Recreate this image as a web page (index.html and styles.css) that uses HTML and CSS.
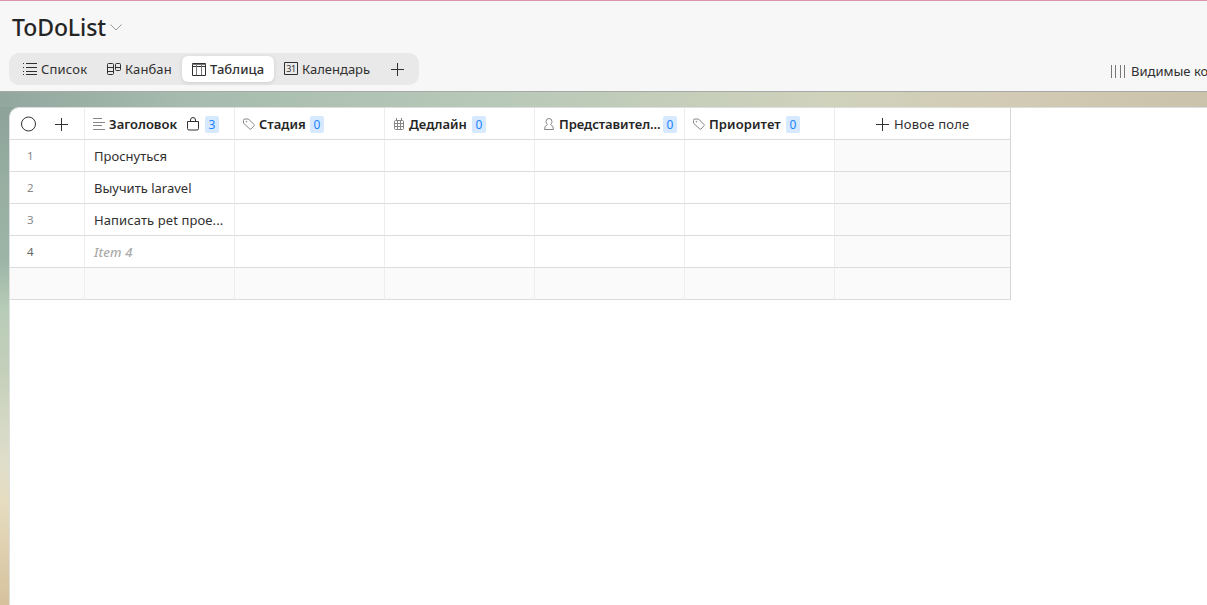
FILE: index.html
```html
<!DOCTYPE html>
<html lang="ru">
<head>
    <meta charset="UTF-8">
    <meta name="viewport" content="width=device-width, initial-scale=1.0">
    <title>ToDoList</title>
    <link rel="stylesheet" href="styles.css">
</head>
<body>
    <header class="header">
        <div class="title">
            <h1>ToDoList</h1>
            <svg class="chevron" width="12" height="7" viewBox="0 0 12 7"><path d="M.5.5 6 6 11.500.5"/></svg>
        </div>
        <div class="toolbar">
            <nav class="tabs">
                <a class="tab tab-list">
                    <svg width="14" height="14" viewBox="0 0 14 14"><path d="M3 1.500h11M3 5.500h11M3 9.500h11M3 12.500h11M0 1.500h1M0 5.500h1M0 9.500h1M0 12.500h1"/></svg>
                    <span>Список</span>
                </a>
                <a class="tab tab-kanban">
                    <svg width="14" height="14" viewBox="0 0 14 14"><path d="M1.500 1.500h4q1 0 1 1v9q0 1-1 1h-4q-1 0-1-1v-9q0-1 1-1zM.5 5.500h6M.5 9.500h6M9.500 1.500h3q1 0 1 1v5q0 1-1 1h-3q-1 0-1-1v-5q0-1 1-1zM8.500 5.500h5"/></svg>
                    <span>Канбан</span>
                </a>
                <a class="tab tab-table active">
                    <svg width="14" height="14" viewBox="0 0 14 14"><path d="M.5 1.500h13v12H.5zM.5 4.500h13"/><path class="thin" d="M.5 2.500h13M4.500 2v11M9.500 2v11"/></svg>
                    <span>Таблица</span>
                </a>
                <a class="tab tab-calendar">
                    <svg width="14" height="14" viewBox="0 0 14 14"><path d="M.5.5h13v12H.5z"/><text class="day" x="7" y="10" text-anchor="middle">31</text></svg>
                    <span>Календарь</span>
                </a>
                <a class="tab tab-add">
                    <svg width="13" height="13" viewBox="0 0 13 13"><path d="M6.500 0v13M0 6.500h13"/></svg>
                </a>
            </nav>
            <div class="columns-btn">
                <svg width="14" height="13" viewBox="0 0 14 13"><path d="M.5 0v13M4.500 0v13M9.500 0v13M13.500 0v13"/></svg>
                <span>Видимые колонки</span>
            </div>
        </div>
    </header>
    <main class="main">
        <div class="panel">
            <table class="grid">
                <colgroup>
                    <col class="col-num"><col><col><col><col><col><col class="col-new">
                </colgroup>
                <thead>
                    <tr>
                        <th>
                            <div class="cell cell-tools">
                                <svg width="16" height="16" viewBox="0 0 16 16"><circle cx="8.500" cy="8" r="7"/></svg>
                                <svg width="13" height="13" viewBox="0 0 13 13"><path d="M6.500 0v13M0 6.500h13"/></svg>
                            </div>
                        </th>
                        <th>
                            <div class="cell">
                                <svg class="icon" width="12" height="12" viewBox="0 0 12 12"><path d="M0 .5h9M0 4.500h12M0 7.500h9M0 11.500h12"/></svg>
                                <span class="name name-title">Заголовок</span>
                                <svg class="lock" width="12" height="14" viewBox="0 0 12 14"><path d="M.5 4.500h11v7q0 1.500-1.500 1.500H2q-1.500 0-1.500-1.500zM3.500 4.500V3a2.500 2.500 0 0 1 5 0v1.500"/></svg>
                                <span class="count">3</span>
                            </div>
                        </th>
                        <th>
                            <div class="cell">
                                <svg class="icon" width="12" height="12" viewBox="0 0 12 12"><path d="M.5 2.500Q.5 1 2 1H5.500L11 6.500q.6.700 0 1.300L8 11q-.6.500-1.200 0L.5 5.200z"/><circle cx="3.500" cy="3.700" r=".4"/></svg>
                                <span class="name name-stage">Стадия</span>
                                <span class="count">0</span>
                            </div>
                        </th>
                        <th>
                            <div class="cell">
                                <svg class="icon icon-date" width="10" height="12" viewBox="0 0 10 12"><path d="M1.500 2.500h7q1 0 1 1v7q0 1-1 1h-7q-1 0-1-1v-7q0-1 1-1zM.5 5.500h9M.5 8.500h9M3.500 3v8M6.500 3v8M2.500 0v2M7.500 0v2"/></svg>
                                <span class="name name-deadline">Дедлайн</span>
                                <span class="count">0</span>
                            </div>
                        </th>
                        <th>
                            <div class="cell">
                                <svg class="icon icon-user" width="10" height="12" viewBox="0 0 10 12"><path d="M3.500 6.500Q2 5.500 2 3.500a3 3 0 0 1 6 0q0 2-1.500 3M3.500 6.500Q.5 7.500.5 11.500h9Q9.500 7.500 6.500 6.500"/></svg>
                                <span class="name name-owner">Представител...</span>
                                <span class="count">0</span>
                            </div>
                        </th>
                        <th>
                            <div class="cell">
                                <svg class="icon" width="12" height="12" viewBox="0 0 12 12"><path d="M.5 2.500Q.5 1 2 1H5.500L11 6.500q.6.700 0 1.300L8 11q-.6.500-1.200 0L.5 5.200z"/><circle cx="3.500" cy="3.700" r=".4"/></svg>
                                <span class="name name-priority">Приоритет</span>
                                <span class="count">0</span>
                            </div>
                        </th>
                        <th>
                            <div class="cell cell-new">
                                <svg width="13" height="13" viewBox="0 0 13 13"><path d="M6.500 0v13M0 6.500h13"/></svg>
                                <span>Новое поле</span>
                            </div>
                        </th>
                    </tr>
                </thead>
                <tbody>
                    <tr><td class="num">1</td><td>Проснуться</td><td></td><td></td><td></td><td></td><td class="blank"></td></tr>
                    <tr><td class="num">2</td><td>Выучить laravel</td><td></td><td></td><td></td><td></td><td class="blank"></td></tr>
                    <tr><td class="num">3</td><td class="long">Написать pet прое...</td><td></td><td></td><td></td><td></td><td class="blank"></td></tr>
                    <tr><td class="num num-new">4</td><td class="placeholder">Item 4</td><td></td><td></td><td></td><td></td><td class="blank"></td></tr>
                    <tr class="blank"><td></td><td></td><td></td><td></td><td></td><td></td><td></td></tr>
                </tbody>
            </table>
        </div>
    </main>
</body>
</html>
```
FILE: styles.css
```css
* {
    box-sizing: border-box;
}
body {
    margin: 0;
    height: 100vh;
    display: flex;
    flex-direction: column;
    overflow: hidden;
    font-family: "Noto Sans", "Open Sans", sans-serif;
    font-size: 13px;
    color: #303030;
}
svg {
    flex: none;
    fill: none;
    stroke: #303030;
}
/* header */
.header {
    height: 92px;
    flex: none;
    border-top: 1px solid #dd94ad;
    border-bottom: 1px solid #a3aaa5;
    background-color: #f7f7f7;
}
.title {
    display: flex;
    align-items: center;
    height: 52px;
    padding-left: 12px;
    gap: 4px;
}
h1 {
    margin: 0;
    font-size: 23px;
    font-weight: 500;
    letter-spacing: -0.1px;
    color: #252525;
}
.chevron {
    stroke: #999;
}
.toolbar {
    display: flex;
    justify-content: space-between;
    padding-left: 9px;
}
.tabs {
    display: flex;
    align-items: center;
    width: 410px;
    height: 32px;
    padding: 3px;
    border-radius: 10px;
    background-color: #e9e9e9;
}
.tab {
    display: flex;
    align-items: center;
    height: 26px;
    padding-left: 10px;
    gap: 4px;
    border-radius: 6px;
    white-space: nowrap;
}
.tab-list {
    width: 85px;
    padding-left: 11px;
    letter-spacing: 0.2px;
}
.tab-kanban {
    width: 85px;
    letter-spacing: 0.1px;
}
.tab-table {
    width: 92px;
}
.tab-calendar {
    width: 107px;
}
.tab.active {
    background-color: #fff;
    box-shadow: 0 1px 4px rgba(0, 0, 0, 0.12);
    font-weight: 500;
    letter-spacing: 0.1px;
}
.thin {
    stroke: #777;
}
.day {
    fill: #303030;
    stroke: none;
    font-size: 9px;
    letter-spacing: -0.3px;
}
.columns-btn {
    display: flex;
    align-items: center;
    width: 96px;
    height: 36px;
    gap: 6px;
    white-space: nowrap;
}
.columns-btn svg {
    stroke: #777;
}
/* wallpaper */
.main {
    flex: 1;
    padding: 15px 0 0 9px;
    background:
        linear-gradient(90deg, #92a79e 0, #a6bbae 180px, #b7c8b8 480px, #d0d2bc 830px, #d3cbb5 1000px, #cbc2ab) top / 100% 15px no-repeat,
        linear-gradient(#8ba199 0, #98afa2 100px, #9cb5a7 170px, #b7ccb7 215px, #c3cfba 275px, #dfdecb 370px, #e6dcc0 410px, #d6c19c);
}
.panel {
    height: 100%;
    border: 1px solid #dcdfdd;
    border-width: 1px 0 0 1px;
    border-radius: 10px 0 0 0;
    background-color: #fff;
    overflow: hidden;
}
/* table */
.grid {
    width: 1001px;
    table-layout: fixed;
    border-spacing: 0;
}
.col-num {
    width: 75px;
}
.col-new {
    width: 176px;
}
th, td {
    height: 32px;
    padding: 0 0 0 9px;
    border-right: 1px solid #ededed;
    border-bottom: 1px solid #dcdcdc;
    text-align: left;
    line-height: 20px;
    white-space: nowrap;
}
th {
    padding-left: 8px;
    font-weight: 400;
}
th:last-child, td:last-child {
    border-right-color: #d6d6d6;
}
.blank {
    background-color: #fafafa;
}
.cell {
    display: flex;
    align-items: center;
    padding-top: 1px;
}
.cell-tools {
    gap: 19px;
    padding-left: 2px;
}
.cell-new {
    padding-left: 33px;
    gap: 5px;
    letter-spacing: 0.2px;
}
.icon {
    stroke: #858585;
    margin-right: 4px;
}
.icon-date {
    margin-left: 1px;
    margin-right: 5px;
}
.icon-user {
    margin-left: 1px;
    margin-right: 5px;
}
.name {
    font-weight: 600;
    color: #252525;
}
.name-title {
    width: 78px;
}
.name-stage {
    width: 51px;
}
.name-deadline {
    width: 63px;
}
.name-owner {
    width: 104px;
    letter-spacing: -0.05px;
}
.name-priority {
    width: 77px;
    letter-spacing: 0.1px;
}
.lock {
    margin-right: 6px;
}
.count {
    width: 14px;
    height: 17px;
    border-radius: 2px;
    background-color: #d6e9ff;
    color: #1a83ff;
    font-size: 12px;
    text-align: center;
    line-height: 17px;
}
.num {
    padding-left: 17px;
    padding-top: 1px;
    font-size: 11.5px;
    color: #888;
}
.num-new {
    color: #666;
}
.long {
    letter-spacing: 0.1px;
}
.placeholder {
    font-style: italic;
    font-weight: 500;
    letter-spacing: 0.1px;
    color: #aaa;
}
```
